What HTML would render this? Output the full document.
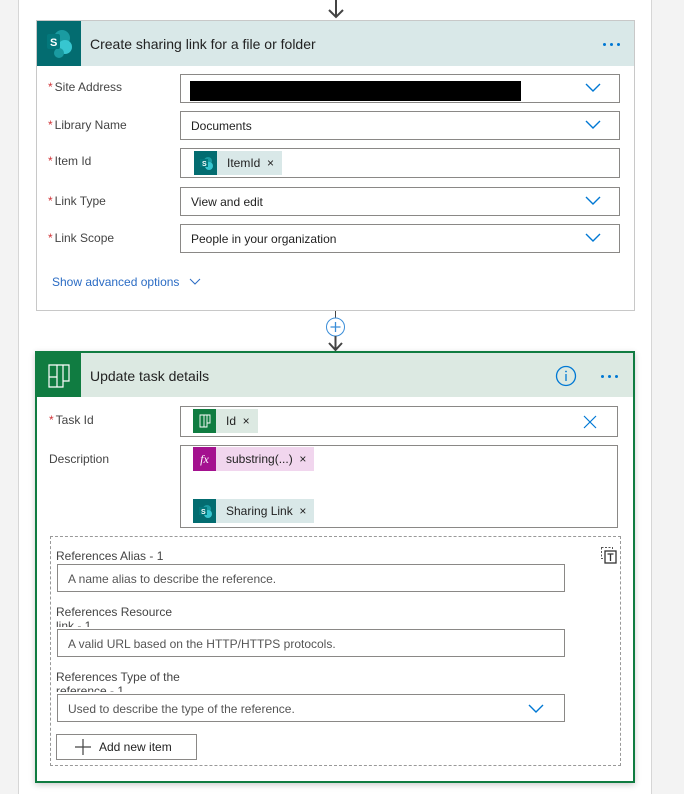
<!DOCTYPE html>
<html><head><meta charset="utf-8"><style>
*{box-sizing:border-box;margin:0;padding:0}
body{width:684px;height:794px;background:#f3f3f3;font-family:"Liberation Sans",sans-serif;font-size:12px;color:#323130;position:relative;overflow:hidden}
.a{position:absolute}
.panel{left:18px;top:0;width:634px;height:794px;background:#fff;border-left:1px solid #d6d6d6;border-right:1px solid #d6d6d6}
.card1{left:36px;top:20px;width:599px;height:291px;border:1px solid #c8c8c8;background:#fff}
.card2{left:35px;top:351px;width:600px;height:432px;border:2px solid #107c41;background:#fff;box-shadow:0 2px 6px rgba(0,0,0,.2)}
.lbl{font-size:12px;color:#444}
.req{color:#d13438;margin-right:2px}
.inp{border:1px solid #8a8886;background:#fff;height:29px}
.chev{position:absolute;right:18px;top:8px}
.tok{position:absolute;height:24px;display:flex;align-items:center;font-size:12px;color:#222}
.tok .ic{width:23px;height:24px;display:flex;align-items:center;justify-content:center}
.tok .tx{padding:0 8px 0 10px;height:24px;display:flex;align-items:center}
.ph{font-size:12px;color:#555;position:absolute;left:10px;top:7px}
.dots{position:absolute;display:flex;gap:4px}
.dots i{width:3px;height:3px;border-radius:50%;background:#0078d4;display:block}
</style></head><body>
<div class="a panel"></div>
<svg class="a" style="left:325px;top:0" width="22" height="20"><path d="M11 0V17M4 10L11 17L18 10" stroke="#444" stroke-width="2" fill="none"/></svg>

<div class="a card1">
  <div class="a" style="left:0;top:0;width:597px;height:45px;background:#d9e8e8"></div>
  <div class="a" style="left:0;top:0;width:44px;height:45px;background:#036c70">
    <svg width="44" height="45"><circle cx="25" cy="17" r="8" fill="#1a9ba1"/><circle cx="28" cy="26" r="7" fill="#37c6d0"/><circle cx="22" cy="32" r="5" fill="#1a9ba1"/><rect x="10" y="13" width="13" height="15" rx="2" fill="#03787c"/><text x="13" y="25" fill="#fff" font-size="11" font-weight="bold" font-family="Liberation Sans">S</text></svg>
  </div>
  <div class="a" style="left:53px;top:15px;font-size:14px;color:#222">Create sharing link for a file or folder</div>
  <div class="dots" style="left:566px;top:22px"><i></i><i></i><i></i></div>

  <div class="a lbl" style="left:11px;top:59px"><span class="req">*</span>Site Address</div>
  <div class="a inp" style="left:143px;top:53px;width:440px"><div class="a" style="left:9px;top:6px;width:331px;height:20px;background:#000"></div><svg class="chev" width="16" height="10"><path d="M1 1L8 8L15 1" stroke="#0078d4" stroke-width="1.4" fill="none"/></svg></div>

  <div class="a lbl" style="left:11px;top:97px"><span class="req">*</span>Library Name</div>
  <div class="a inp" style="left:143px;top:90px;width:440px"><span class="ph" style="color:#222">Documents</span><svg class="chev" width="16" height="10"><path d="M1 1L8 8L15 1" stroke="#0078d4" stroke-width="1.4" fill="none"/></svg></div>

  <div class="a lbl" style="left:11px;top:133px"><span class="req">*</span>Item Id</div>
  <div class="a inp" style="left:143px;top:127px;width:440px;height:30px">
    <div class="tok" style="left:13px;top:2px"><div class="ic" style="background:#036c70"><svg width="18" height="16"><circle cx="11" cy="6" r="4" fill="#1a9ba1"/><circle cx="12" cy="11" r="4" fill="#37c6d0"/><rect x="3" y="4" width="8" height="8" fill="#03787c"/><text x="5" y="11" fill="#fff" font-size="7" font-weight="bold">S</text></svg></div><div class="tx" style="background:#d9e8e8">ItemId&nbsp;&nbsp;×</div></div>
  </div>

  <div class="a lbl" style="left:11px;top:173px"><span class="req">*</span>Link Type</div>
  <div class="a inp" style="left:143px;top:166px;width:440px"><span class="ph" style="color:#222">View and edit</span><svg class="chev" width="16" height="10"><path d="M1 1L8 8L15 1" stroke="#0078d4" stroke-width="1.4" fill="none"/></svg></div>

  <div class="a lbl" style="left:11px;top:210px"><span class="req">*</span>Link Scope</div>
  <div class="a inp" style="left:143px;top:203px;width:440px"><span class="ph" style="color:#222">People in your organization</span><svg class="chev" width="16" height="10"><path d="M1 1L8 8L15 1" stroke="#0078d4" stroke-width="1.4" fill="none"/></svg></div>

  <div class="a" style="left:15px;top:254px;color:#2b6cc4;font-size:12px">Show advanced options&nbsp;&nbsp;&nbsp;<svg width="12" height="8"><path d="M1 1L6 6L11 1" stroke="#2b6cc4" stroke-width="1" fill="none"/></svg></div>
</div>

<div class="a" style="left:335px;top:311px;width:1px;height:10px;background:#444"></div>
<svg class="a" style="left:325px;top:317px" width="22" height="34"><circle cx="10.5" cy="10" r="9" fill="#fff" stroke="#3a8dd8" stroke-width="1"/><path d="M10.5 5V15M5.5 10H15.5" stroke="#3a8dd8" stroke-width="1.3"/><path d="M10.5 19V33M4 26L10.5 33L17 26" stroke="#444" stroke-width="2" fill="none"/></svg>

<div class="a card2">
  <div class="a" style="left:0;top:0;width:596px;height:44px;background:#dce9e2"></div>
  <div class="a" style="left:0;top:0;width:44px;height:44px;background:#107c41">
    <svg width="44" height="44"><path d="M12 12H32V28H26V34H12Z M20 12V34 M26 12V28 M12 24H20" stroke="#fff" stroke-width="1.2" fill="none"/></svg>
  </div>
  <div class="a" style="left:53px;top:15px;font-size:14px;color:#222">Update task details</div>
  <svg class="a" style="left:518px;top:12px" width="22" height="22"><circle cx="11" cy="11" r="9.5" stroke="#0078d4" stroke-width="1.3" fill="none"/><path d="M11 9V16" stroke="#0078d4" stroke-width="1.3"/><circle cx="11" cy="6.5" r="0.9" fill="#0078d4"/></svg>
  <div class="dots" style="left:564px;top:22px"><i></i><i></i><i></i></div>

  <div class="a lbl" style="left:12px;top:60px"><span class="req">*</span>Task Id</div>
  <div class="a inp" style="left:143px;top:53px;width:438px;height:31px">
    <div class="tok" style="left:12px;top:2px"><div class="ic" style="background:#107c41"><svg width="14" height="16"><path d="M2 2H12V10H9V14H2Z M6 2V14 M9 2V10" stroke="#fff" stroke-width="0.9" fill="none"/></svg></div><div class="tx" style="background:#dce9e2">Id&nbsp;&nbsp;×</div></div>
    <svg class="a" style="left:402px;top:8px" width="14" height="14"><path d="M1 1L13 13M13 1L1 13" stroke="#0078d4" stroke-width="1.2"/></svg>
  </div>

  <div class="a lbl" style="left:12px;top:99px">Description</div>
  <div class="a inp" style="left:143px;top:92px;width:438px;height:83px">
    <div class="tok" style="left:12px;top:1px"><div class="ic" style="background:#a4118f;color:#fff;font-family:'Liberation Serif',serif;font-style:italic;font-size:12px">fx</div><div class="tx" style="background:#f1d6ee">substring(...)&nbsp;&nbsp;×</div></div>
    <div class="tok" style="left:12px;top:53px"><div class="ic" style="background:#036c70"><svg width="18" height="16"><circle cx="11" cy="6" r="4" fill="#1a9ba1"/><circle cx="12" cy="11" r="4" fill="#37c6d0"/><rect x="3" y="4" width="8" height="8" fill="#03787c"/><text x="5" y="11" fill="#fff" font-size="7" font-weight="bold">S</text></svg></div><div class="tx" style="background:#d9e8e8">Sharing Link&nbsp;&nbsp;×</div></div>
  </div>

  <div class="a" style="left:13px;top:183px;width:571px;height:230px;border:1px dashed #999"></div>
  <svg class="a" style="left:563px;top:193px" width="20" height="20"><rect x="1.5" y="1.5" width="11" height="11" stroke="#555" stroke-dasharray="2 1.5" fill="none"/><rect x="5" y="5" width="11" height="12" fill="#fff" stroke="#333" stroke-width="1.3"/><path d="M7.5 8H13.5M10.5 8V15" stroke="#333" stroke-width="1.3"/></svg>

  <div class="a lbl" style="left:19px;top:196px">References Alias - 1</div>
  <div class="a" style="left:20px;top:211px;width:508px;height:28px;border:1px solid #8a8886"><span class="ph">A name alias to describe the reference.</span></div>

  <div class="a lbl" style="left:19px;top:252px">References Resource</div>
  <div class="a lbl" style="left:19px;top:266px;height:8px;overflow:hidden">link - 1</div>
  <div class="a" style="left:20px;top:276px;width:508px;height:28px;border:1px solid #8a8886;background:#fff"><span class="ph">A valid URL based on the HTTP/HTTPS protocols.</span></div>

  <div class="a lbl" style="left:19px;top:317px">References Type of the</div>
  <div class="a lbl" style="left:19px;top:331px;height:8px;overflow:hidden">reference - 1</div>
  <div class="a" style="left:20px;top:341px;width:508px;height:28px;border:1px solid #8a8886;background:#fff"><span class="ph">Used to describe the type of the reference.</span><svg class="a" style="left:470px;top:9px" width="16" height="10"><path d="M1 1L8 8L15 1" stroke="#0078d4" stroke-width="1.4" fill="none"/></svg></div>

  <div class="a" style="left:19px;top:381px;width:141px;height:26px;border:1px solid #8a8886;background:#fff;display:flex;align-items:center;font-size:12px;color:#222"><svg style="margin:0 8px 0 18px" width="16" height="16"><path d="M8 0V16M0 8H16" stroke="#444" stroke-width="1.2"/></svg>Add new item</div>
</div>
</body></html>
